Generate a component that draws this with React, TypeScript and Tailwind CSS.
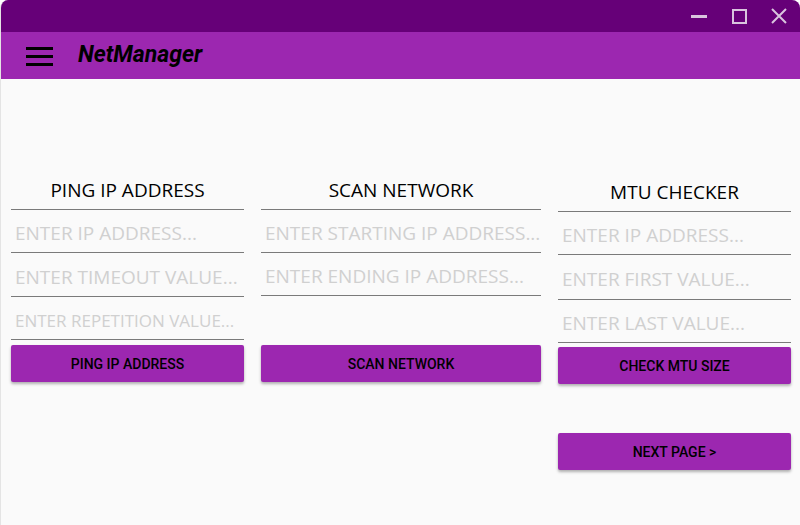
import React from "react";

const Field = ({ text, h = 43, size = 19 }: { text: string; h?: number; size?: number }) => (
  <div
    className="border-b border-[#7a7a7a] flex items-center pl-1 pt-[5px] overflow-hidden whitespace-nowrap text-[#d0d0d0] [font-family:'Open_Sans','Noto_Sans',sans-serif]"
    style={{ height: h, fontSize: size }}
  >
    {text}
  </div>
);

const Btn = ({ text }: { text: string }) => (
  <div className="h-[37px] rounded-[2px] bg-[#9c27b0] shadow-[0_2px_3px_rgba(0,0,0,0.3)] flex items-center justify-center pt-[1px] text-[14px] font-medium text-black [font-family:Roboto,sans-serif]">
    {text}
  </div>
);

const Heading = ({ text }: { text: string }) => (
  <div className="h-[40px] border-b border-[#7a7a7a] flex items-center justify-center pt-[2px] text-[19px] text-black [font-family:'Open_Sans','Noto_Sans',sans-serif]">
    {text}
  </div>
);

export default function App() {
  return (
    <div className="w-[800px] h-[525px] bg-white overflow-hidden">
      <div className="w-full h-full rounded-t-[8px] overflow-hidden flex flex-col bg-[#fafafa] border-l border-[#e4e4e4]">
        <div className="h-[32px] bg-[#660078] flex items-center justify-end pr-[1px] shrink-0">
          <div className="w-[40px] h-[32px] flex items-center justify-center">
            <div className="w-[16px] h-[3px] bg-[#d9c4de]" />
          </div>
          <div className="w-[40px] h-[32px] flex items-center justify-center">
            <div className="w-[15px] h-[15px] border-2 border-[#d9c4de]" />
          </div>
          <div className="w-[40px] h-[32px] flex items-center justify-center">
            <svg width="16" height="16" viewBox="0 0 16 16">
              <path d="M1 1L15 15M15 1L1 15" stroke="#d9c4de" strokeWidth="2" />
            </svg>
          </div>
        </div>
        <div className="h-[47px] bg-[#9c27b0] flex items-center shrink-0">
          <div className="ml-[25px] mt-[2px] flex flex-col gap-[5px]">
            <div className="w-[27px] h-[3px] bg-black" />
            <div className="w-[27px] h-[3px] bg-black" />
            <div className="w-[27px] h-[3px] bg-black" />
          </div>
          <div className="ml-[25px] text-[23px] font-bold italic text-black [font-family:Roboto,sans-serif]">
            NetManager
          </div>
        </div>
        <div className="flex gap-[17px] pl-[10px] pr-[9px] pt-[91px]">
          <div className="w-[233px] flex flex-col">
            <Heading text="PING IP ADDRESS" />
            <Field text="ENTER IP ADDRESS..." />
            <Field text="ENTER TIMEOUT VALUE..." h={44} />
            <Field text="ENTER REPETITION VALUE..." size={17} />
            <div className="mt-[5px]"><Btn text="PING IP ADDRESS" /></div>
          </div>
          <div className="w-[280px] flex flex-col">
            <Heading text="SCAN NETWORK" />
            <Field text="ENTER STARTING IP ADDRESS..." />
            <Field text="ENTER ENDING IP ADDRESS..." />
            <div className="mt-[49px]"><Btn text="SCAN NETWORK" /></div>
          </div>
          <div className="w-[233px] flex flex-col pt-[2px]">
            <Heading text="MTU CHECKER" />
            <Field text="ENTER IP ADDRESS..." />
            <Field text="ENTER FIRST VALUE..." h={45} />
            <Field text="ENTER LAST VALUE..." />
            <div className="mt-[4px]"><Btn text="CHECK MTU SIZE" /></div>
            <div className="mt-[49px]"><Btn text="NEXT PAGE >" /></div>
          </div>
        </div>
      </div>
    </div>
  );
}
